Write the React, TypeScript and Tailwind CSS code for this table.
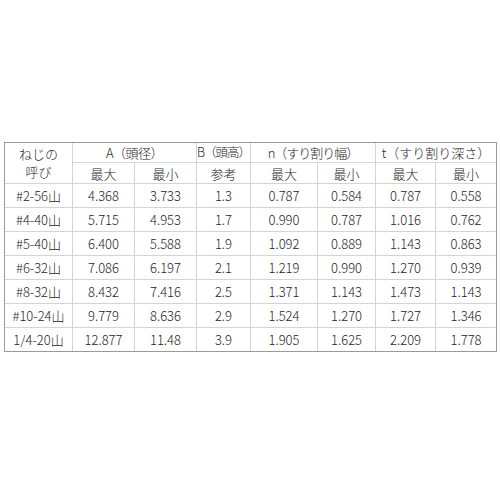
const rows = [
  ['#2-56山', '4.368', '3.733', '1.3', '0.787', '0.584', '0.787', '0.558'],
  ['#4-40山', '5.715', '4.953', '1.7', '0.990', '0.787', '1.016', '0.762'],
  ['#5-40山', '6.400', '5.588', '1.9', '1.092', '0.889', '1.143', '0.863'],
  ['#6-32山', '7.086', '6.197', '2.1', '1.219', '0.990', '1.270', '0.939'],
  ['#8-32山', '8.432', '7.416', '2.5', '1.371', '1.143', '1.473', '1.143'],
  ['#10-24山', '9.779', '8.636', '2.9', '1.524', '1.270', '1.727', '1.346'],
  ['1/4-20山', '12.877', '11.48', '3.9', '1.905', '1.625', '2.209', '1.778'],
];

const widths = ['w-[68px]', 'w-[62px]', 'w-[62px]', 'w-[54px]', 'w-[67px]', 'w-[58px]', 'w-[60px]', 'w-[61px]'];

const base = 'border border-[#d4d4d4] text-center align-middle p-0 whitespace-nowrap';
const cell = `${base} leading-none`;

export default function App() {
  return (
    <div className="min-h-[500px] w-[500px] bg-white pt-[142px] pl-[4px] font-['Noto_Sans_CJK_JP',sans-serif] font-light text-[13px] text-[#262626]">
      <table className="table-fixed border-collapse w-[492px] outline outline-1 outline-[#9a9a9a] -outline-offset-1">
        <colgroup>
          {widths.map((w, i) => (
            <col key={i} className={w} />
          ))}
        </colgroup>
        <thead>
          <tr className="h-[20px]">
            <td rowSpan={2} className={`${base} leading-[18px]`}>
              ねじの
              <br />
              呼び
            </td>
            <td colSpan={2} className={`${cell} tracking-[-0.5px]`}>A（頭径）</td>
            <td className={`${cell} text-[12.5px] tracking-[-1px]`}>B（頭高）</td>
            <td colSpan={2} className={`${cell} tracking-[-1px]`}>n（すり割り幅）</td>
            <td colSpan={2} className={cell}>t（すり割り深さ）</td>
          </tr>
          <tr className="h-[21px]">
            <td className={cell}>最大</td>
            <td className={cell}>最小</td>
            <td className={cell}>参考</td>
            <td className={cell}>最大</td>
            <td className={cell}>最小</td>
            <td className={cell}>最大</td>
            <td className={cell}>最小</td>
          </tr>
        </thead>
        <tbody>
          {rows.map((r) => (
            <tr key={r[0]} className="h-[24px]">
              {r.map((v, i) => (
                <td key={i} className={cell}>
                  {v}
                </td>
              ))}
            </tr>
          ))}
        </tbody>
      </table>
    </div>
  );
}
